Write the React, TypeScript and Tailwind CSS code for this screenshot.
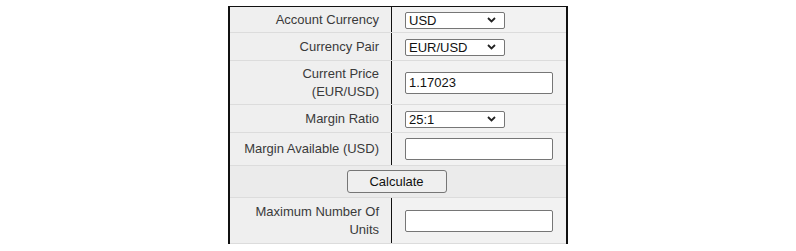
import React from 'react';

function Chevron() {
  return (
    <svg width="9" height="6" viewBox="0 0 9 6" className="absolute right-[9px] top-1/2 -translate-y-1/2 pointer-events-none">
      <path d="M1 1 L4.5 4.5 L8 1" fill="none" stroke="#222" strokeWidth="1.8" />
    </svg>
  );
}

function Select({ value }: { value: string }) {
  return (
    <div className="relative w-[100px] h-[17px]">
      <select
        defaultValue={value}
        className="appearance-none w-full h-full bg-white border border-[#767676] rounded-[2px] pl-[3px] text-[13px] leading-[15px] text-[#111] outline-none"
      >
        <option>{value}</option>
      </select>
      <Chevron />
    </div>
  );
}

function TextInput({ value = '' }: { value?: string }) {
  return (
    <input
      defaultValue={value}
      className="w-[148px] h-[22px] bg-white border border-[#767676] rounded-[2px] px-[3px] text-[13px] text-[#111] outline-none"
    />
  );
}

function Row({ label, h, children }: { label: React.ReactNode; h: string; children: React.ReactNode }) {
  return (
    <div className={`flex ${h} border-b border-[#dcdcdc]`}>
      <div className="w-[161px] shrink-0 flex items-center justify-end text-right pr-[12px] bg-[#efefef] leading-[18px]">
        {label}
      </div>
      <div className="w-px bg-[#111]" />
      <div className="flex-1 flex items-center pl-[13px] bg-[#f2f2f2]">{children}</div>
    </div>
  );
}

export default function App() {
  return (
    <div className="w-[796px] h-[251px] bg-white pt-[6px]" style={{ fontFamily: '"Liberation Sans", Arial, sans-serif' }}>
      <div className="mx-auto w-[340px] border-t border-x-2 border-[#111] text-[13px] text-[#3a3a3a]">
        <Row label="Account Currency" h="h-[26px]">
          <Select value="USD" />
        </Row>
        <Row label="Currency Pair" h="h-[28px]">
          <Select value="EUR/USD" />
        </Row>
        <Row label={<span>Current Price<br />(EUR/USD)</span>} h="h-[44px]">
          <TextInput value="1.17023" />
        </Row>
        <Row label="Margin Ratio" h="h-[28px]">
          <Select value="25:1" />
        </Row>
        <Row label="Margin Available (USD)" h="h-[33px]">
          <TextInput />
        </Row>
        <div className="flex h-[32px] items-center justify-center bg-[#ebebeb] border-b border-[#dcdcdc]">
          <button className="w-[100px] h-[23px] bg-[#efefef] border border-[#767676] rounded-[3px] text-[13px] text-[#111] -ml-[3px]">
            Calculate
          </button>
        </div>
        <Row label={<span>Maximum Number Of<br />Units</span>} h="h-[46px]">
          <TextInput />
        </Row>
      </div>
    </div>
  );
}
